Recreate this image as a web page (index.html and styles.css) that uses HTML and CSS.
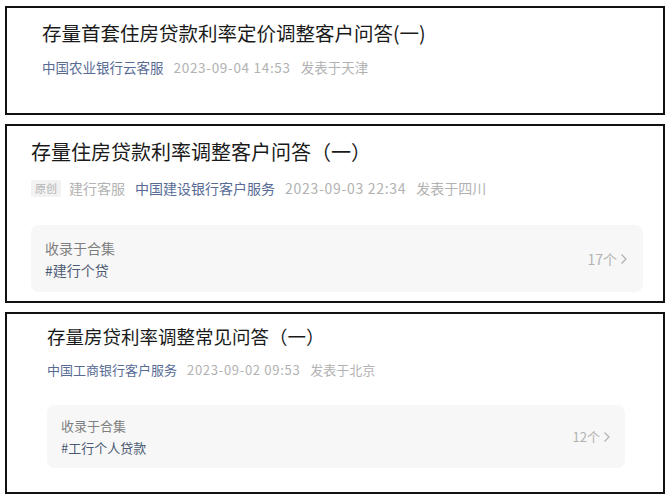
FILE: index.html
```html
<!DOCTYPE html>
<html lang="zh-CN">
<head>
<meta charset="utf-8">
<title>存量房贷利率调整问答</title>
<link rel="stylesheet" href="styles.css">
</head>
<body>
<div class="list">
  <section class="card card-a">
    <h1 class="title">存量首套住房贷款利率定价调整客户问答(一)</h1>
    <div class="meta">
      <span class="link">中国农业银行云客服</span>
      <span class="muted date">2023-09-04 14:53</span>
      <span class="muted">发表于天津</span>
    </div>
  </section>

  <section class="card card-b">
    <h1 class="title">存量住房贷款利率调整客户问答（一）</h1>
    <div class="meta">
      <span class="tag">原创</span>
      <span class="muted">建行客服</span>
      <span class="link">中国建设银行客户服务</span>
      <span class="muted date">2023-09-03 22:34</span>
      <span class="muted">发表于四川</span>
    </div>
    <div class="album">
      <div class="album-text">
        <div class="album-label">收录于合集</div>
        <div class="album-name">#建行个贷</div>
      </div>
      <div class="album-count">17个<span class="chev"><svg width="8" height="12" viewBox="0 0 8 12"><path d="M1.5 1.5 L6 6 L1.5 10.5" fill="none" stroke="#b2b2b2" stroke-width="1.3"/></svg></span></div>
    </div>
  </section>

  <section class="card card-c">
    <h1 class="title">存量房贷利率调整常见问答（一）</h1>
    <div class="meta">
      <span class="link">中国工商银行客户服务</span>
      <span class="muted date">2023-09-02 09:53</span>
      <span class="muted">发表于北京</span>
    </div>
    <div class="album">
      <div class="album-text">
        <div class="album-label">收录于合集</div>
        <div class="album-name">#工行个人贷款</div>
      </div>
      <div class="album-count">12个<span class="chev"><svg width="8" height="12" viewBox="0 0 8 12"><path d="M1.5 1.5 L6 6 L1.5 10.5" fill="none" stroke="#b2b2b2" stroke-width="1.2"/></svg></span></div>
    </div>
  </section>
</div>
</body>
</html>
```

FILE: styles.css
```css
* { box-sizing: border-box; }
html, body { margin: 0; padding: 0; background: #fff; }
body {
  font-family: "Noto Sans CJK SC", "Noto Sans", sans-serif;
  color: rgba(0,0,0,0.9);
}
.list {
  display: flex;
  flex-direction: column;
  gap: 9px;
  padding: 6px 0 0 5px;
  width: 665px;
}
.card {
  border: 2px solid #111;
  background: #fff;
  display: flex;
  flex-direction: column;
}
.title {
  margin: 0;
  font-weight: 400;
  color: #1a1a1a;
  white-space: nowrap;
}
.meta {
  display: flex;
  align-items: center;
  gap: 10px;
  white-space: nowrap;
}
.link { color: #576b95; }
.muted { color: #b2b2b2; }
.date { letter-spacing: 0.7px; }
.tag {
  background: #f2f2f2;
  color: #b2b2b2;
  font-size: 11px;
  line-height: 17px;
  padding: 0 4px;
  border-radius: 2px;
  margin-right: -2px;
}
.album {
  background: #f7f7f7;
  border-radius: 8px;
  display: flex;
  align-items: center;
  justify-content: space-between;
}
.album-label { color: #7f7f7f; }
.album-name { color: #4d5a73; }
.album-count {
  color: #b2b2b2;
  display: flex;
  align-items: center;
  gap: 3px;
}
.chev { display: flex; }

/* card A */
.card-a {
  height: 109px;
  padding: 11px 0 0 35px;
}
.card-a .title { font-size: 19.5px; line-height: 28px; }
.card-a .meta { font-size: 13.5px; line-height: 20px; margin-top: 10px; }

/* card B */
.card-b {
  height: 179px;
  padding: 12px 20px 0 24px;
}
.card-b .title { font-size: 20px; line-height: 28px; }
.card-b .meta { font-size: 14px; line-height: 20px; margin-top: 12px; }
.card-b .album {
  margin-top: 27px;
  height: 67px;
  padding: 0 15px 0 14px;
  font-size: 14px;
  line-height: 22px;
}

/* card C */
.card-c {
  height: 182px;
  padding: 9px 38px 0 40px;
}
.card-c .title { font-size: 18.5px; line-height: 26px; }
.card-c .meta { font-size: 13px; line-height: 20px; margin-top: 11px; }
.card-c .album {
  margin-top: 25px;
  height: 63px;
  padding: 0 14px 0 14px;
  font-size: 13px;
  line-height: 22px;
}
```
